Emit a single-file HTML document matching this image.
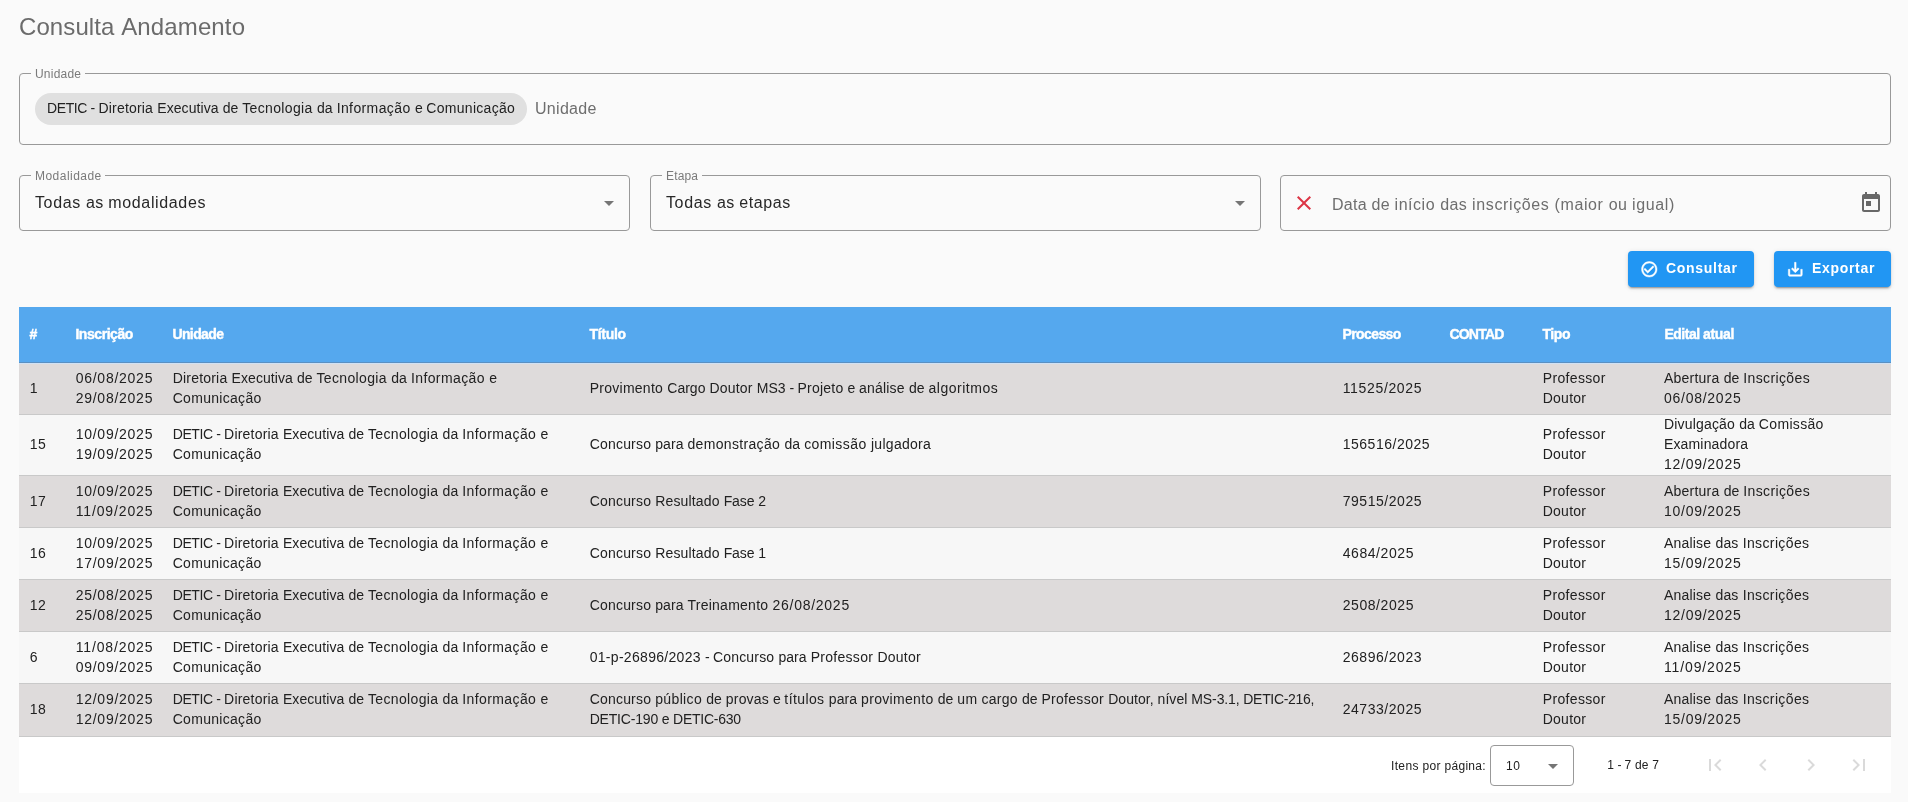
<!DOCTYPE html>
<html lang="pt-BR">
<head>
<meta charset="utf-8">
<title>Consulta Andamento</title>
<style>
*{box-sizing:border-box;}
html,body{margin:0;padding:0;}
body{will-change:transform;width:1908px;height:802px;background:#fafafa;font-family:"Liberation Sans",sans-serif;color:rgba(0,0,0,.87);position:relative;overflow:hidden;}
.abs{position:absolute;}
.t{white-space:nowrap;}
h1{position:absolute;left:19px;top:10.5px;margin:0;font-size:24px;line-height:32px;font-weight:400;color:#6b6b6b;white-space:nowrap;}
.field{position:absolute;border:1px solid #999;border-radius:4px;}
.lbl{position:absolute;left:10.8px;top:-7px;padding:0 3.7px 0 4.2px;background:#fafafa;font-size:12px;line-height:14px;color:#7a7a7a;white-space:nowrap;}
.chip{position:absolute;left:15px;top:19px;height:32px;border-radius:16px;background:#e0e0e0;padding:0 12px;font-size:14px;line-height:32px;color:#212121;white-space:nowrap;}
.ph{position:absolute;font-size:16px;line-height:24px;color:#6e6e6e;white-space:nowrap;}
.val{position:absolute;left:15px;top:15px;font-size:16px;line-height:24px;color:#282828;white-space:nowrap;}
.arrow{position:absolute;width:0;height:0;border-left:5px solid transparent;border-right:5px solid transparent;border-top:5px solid #757575;}
.btn{position:absolute;height:36px;top:251px;border-radius:4px;background:#2196f3;color:#fff;font-size:14px;font-weight:700;line-height:36px;white-space:nowrap;box-shadow:0 3px 1px -2px rgba(0,0,0,.2),0 2px 2px 0 rgba(0,0,0,.14),0 1px 5px 0 rgba(0,0,0,.12);}
.btn svg{position:absolute;left:11.7px;top:8.9px;width:18.6px;height:18.6px;fill:#fff;stroke:#fff;stroke-width:.6;}
.btn .bl{position:absolute;left:38px;top:-1px;}
.tbl{position:absolute;left:19px;top:307px;width:1872px;}
.thead{position:relative;height:56px;background:#55a8ee;border-bottom:1px solid #5a90c2;color:#fff;font-size:14px;font-weight:700;}
.thead .c{position:absolute;top:0;line-height:55px;white-space:nowrap;-webkit-text-stroke:.42px #fff;margin-left:.4px;}
.tr{position:relative;border-bottom:1px solid #c9c9c9;font-size:14px;line-height:20px;color:#212121;}
.tr.odd{background:#dedbdb;}
.tr.even{background:#f7f7f7;}
.tr .c{position:absolute;margin-left:.7px;top:0;bottom:1.2px;display:flex;align-items:center;white-space:nowrap;}
.pag{position:relative;height:56px;background:#fff;font-size:12px;color:#212121;}
.pag .pl{position:absolute;left:1372px;top:18.5px;line-height:20px;white-space:nowrap;}
.pag .psel{position:absolute;left:1471px;top:8px;width:84px;height:41px;border:1px solid #999;border-radius:4px;}
.pag .pv{position:absolute;left:15px;top:10px;line-height:20px;}
.pag .pr{position:absolute;left:1588.2px;top:17.7px;line-height:20px;white-space:nowrap;}
.pag .nav{position:absolute;top:16px;width:24px;height:24px;fill:#dadada;}
.chip .t{position:relative;top:-.7px;}
.tr:nth-child(2){box-shadow:inset 0 1px 0 #d0e2f5;}

</style>
</head>
<body>
<h1><span class="t h"><span style="letter-spacing:.09px">Consulta </span><span style="letter-spacing:.13px">Andamento</span></span></h1>

<div class="field" style="left:19px;top:73px;width:1872px;height:72px;">
  <div class="lbl"><span class="t lb"><span style="letter-spacing:.22px">Unidade</span></span></div>
  <div class="chip"><span class="t ch"><span style="letter-spacing:-.39px">DETIC </span><span style="letter-spacing:-.36px">- </span><span style="letter-spacing:.2px">Diretoria </span><span style="letter-spacing:.09px">Executiva </span><span style="letter-spacing:.02px">de </span><span style="letter-spacing:.35px">Tecnologia </span><span style="letter-spacing:.09px">da </span><span style="letter-spacing:.39px">Informação </span><span style="letter-spacing:-.14px">e </span><span style="letter-spacing:.3px">Comunicação</span></span></div>
  <div class="ph" style="left:515px;top:23px;"><span class="t in"><span style="letter-spacing:.29px">Unidade</span></span></div>
</div>

<div class="field" style="left:19px;top:175px;width:611px;height:56px;">
  <div class="lbl"><span class="t lb"><span style="letter-spacing:.47px">Modalidade</span></span></div>
  <div class="val"><span class="t in"><span style="letter-spacing:.62px">Todas </span><span style="letter-spacing:.36px">as </span><span style="letter-spacing:.64px">modalidades</span></span></div>
  <i class="arrow" style="left:584px;top:25px;"></i>
</div>
<div class="field" style="left:650px;top:175px;width:611px;height:56px;">
  <div class="lbl"><span class="t lb"><span style="letter-spacing:.17px">Etapa</span></span></div>
  <div class="val"><span class="t in"><span style="letter-spacing:.62px">Todas </span><span style="letter-spacing:.36px">as </span><span style="letter-spacing:.57px">etapas</span></span></div>
  <i class="arrow" style="left:584px;top:25px;"></i>
</div>
<div class="field" style="left:1280px;top:175px;width:611px;height:56px;">
  <svg class="abs" style="left:11px;top:15px;width:24px;height:24px;" viewBox="0 0 24 24"><path fill="#dc3545" d="M19 6.41L17.59 5 12 10.59 6.41 5 5 6.41 10.59 12 5 17.59 6.41 19 12 13.41 17.59 19 19 17.59 13.41 12z"/></svg>
  <div class="ph" style="left:51px;top:17px;"><span class="t in"><span style="letter-spacing:.27px">Data </span><span style="letter-spacing:.24px">de </span><span style="letter-spacing:.54px">início </span><span style="letter-spacing:.43px">das </span><span style="letter-spacing:.62px">inscrições </span><span style="letter-spacing:.62px">(maior </span><span style="letter-spacing:.39px">ou </span><span style="letter-spacing:.64px">igual)</span></span></div>
  <svg class="abs" style="left:578px;top:15px;width:24px;height:24px;" viewBox="0 0 24 24"><path fill="#686868" d="M19 3h-1V1h-2v2H8V1H6v2H5c-1.11 0-1.99.9-1.99 2L3 19c0 1.1.89 2 2 2h14c1.1 0 2-.9 2-2V5c0-1.1-.9-2-2-2zm0 16H5V8h14v11zM7 10h5v5H7z"/></svg>
</div>

<div class="btn" style="left:1628px;width:126px;">
  <svg viewBox="0 0 24 24"><path d="M16.59 7.58L10 14.17l-3.59-3.58L5 12l5 5 8-8zM12 2C6.48 2 2 6.48 2 12s4.48 10 10 10 10-4.48 10-10S17.52 2 12 2zm0 18c-4.42 0-8-3.58-8-8s3.58-8 8-8 8 3.58 8 8-3.58 8-8 8z"/></svg>
  <div class="bl"><span class="t bt"><span style="letter-spacing:.71px">Consultar</span></span></div>
</div>
<div class="btn" style="left:1774px;width:117px;">
  <svg viewBox="0 0 24 24"><path d="M19 12v7H5v-7H3v7c0 1.1.9 2 2 2h14c1.1 0 2-.9 2-2v-7h-2zm-6 .67l2.59-2.58L17 11.5l-5 5-5-5 1.41-1.41L11 12.67V3h2z"/></svg>
  <div class="bl"><span class="t bt"><span style="letter-spacing:.68px">Exportar</span></span></div>
</div>

<div class="tbl">
<div class="thead">
<div class="c" style="left:10px"><span class="t th"><span>#</span></span></div>
<div class="c" style="left:56px"><span class="t th"><span style="letter-spacing:-.44px">Inscrição</span></span></div>
<div class="c" style="left:153px"><span class="t th"><span style="letter-spacing:-.6px">Unidade</span></span></div>
<div class="c" style="left:570px"><span class="t th"><span style="letter-spacing:-.28px">Título</span></span></div>
<div class="c" style="left:1323px"><span class="t th"><span style="letter-spacing:-.58px">Processo</span></span></div>
<div class="c" style="left:1430px"><span class="t th"><span style="letter-spacing:-.78px">CONTAD</span></span></div>
<div class="c" style="left:1523px"><span class="t th"><span style="letter-spacing:-.38px">Tipo</span></span></div>
<div class="c" style="left:1645px"><span class="t th"><span style="letter-spacing:-.47px">Edital </span><span style="letter-spacing:-.35px">atual</span></span></div>
</div>
<div class="tr odd" style="height:52px">
<div class="c" style="left:10px"><div><span class="t td"><span>1</span></span></div></div>
<div class="c" style="left:56px"><div><span class="t td"><span style="letter-spacing:.74px">06/08/2025</span></span><br><span class="t td"><span style="letter-spacing:.74px">29/08/2025</span></span></div></div>
<div class="c" style="left:153px"><div><span class="t td"><span style="letter-spacing:.2px">Diretoria </span><span style="letter-spacing:.09px">Executiva </span><span style="letter-spacing:.02px">de </span><span style="letter-spacing:.35px">Tecnologia </span><span style="letter-spacing:.09px">da </span><span style="letter-spacing:.39px">Informação </span><span>e</span></span><br><span class="t td"><span style="letter-spacing:.3px">Comunicação</span></span></div></div>
<div class="c" style="left:570px"><div><span class="t td"><span style="letter-spacing:.26px">Provimento </span><span style="letter-spacing:.02px">Cargo </span><span style="letter-spacing:.2px">Doutor </span><span style="letter-spacing:.05px">MS3 </span><span style="letter-spacing:-.36px">- </span><span style="letter-spacing:.23px">Projeto </span><span style="letter-spacing:-.14px">e </span><span style="letter-spacing:.21px">análise </span><span style="letter-spacing:.03px">de </span><span style="letter-spacing:.53px">algoritmos</span></span></div></div>
<div class="c" style="left:1323px"><div><span class="t td"><span style="letter-spacing:.66px">11525/2025</span></span></div></div>
<div class="c" style="left:1523px"><div><span class="t td"><span style="letter-spacing:.35px">Professor</span></span><br><span class="t td"><span style="letter-spacing:.26px">Doutor</span></span></div></div>
<div class="c" style="left:1644.3px"><div><span class="t td"><span style="letter-spacing:.23px">Abertura </span><span style="letter-spacing:.03px">de </span><span style="letter-spacing:.38px">Inscrições</span></span><br><span class="t td"><span style="letter-spacing:.74px">06/08/2025</span></span></div></div>
</div>
<div class="tr even" style="height:61px">
<div class="c" style="left:10px"><div><span class="t td"><span style="letter-spacing:.42px">15</span></span></div></div>
<div class="c" style="left:56px"><div><span class="t td"><span style="letter-spacing:.74px">10/09/2025</span></span><br><span class="t td"><span style="letter-spacing:.74px">19/09/2025</span></span></div></div>
<div class="c" style="left:153px"><div><span class="t td"><span style="letter-spacing:-.39px">DETIC </span><span style="letter-spacing:-.36px">- </span><span style="letter-spacing:.2px">Diretoria </span><span style="letter-spacing:.09px">Executiva </span><span style="letter-spacing:.02px">de </span><span style="letter-spacing:.35px">Tecnologia </span><span style="letter-spacing:.09px">da </span><span style="letter-spacing:.39px">Informação </span><span>e</span></span><br><span class="t td"><span style="letter-spacing:.3px">Comunicação</span></span></div></div>
<div class="c" style="left:570px"><div><span class="t td"><span style="letter-spacing:.19px">Concurso </span><span style="letter-spacing:.07px">para </span><span style="letter-spacing:.33px">demonstração </span><span style="letter-spacing:.09px">da </span><span style="letter-spacing:.42px">comissão </span><span style="letter-spacing:.29px">julgadora</span></span></div></div>
<div class="c" style="left:1323px"><div><span class="t td"><span style="letter-spacing:.52px">156516/2025</span></span></div></div>
<div class="c" style="left:1523px"><div><span class="t td"><span style="letter-spacing:.35px">Professor</span></span><br><span class="t td"><span style="letter-spacing:.26px">Doutor</span></span></div></div>
<div class="c" style="left:1644.3px"><div><span class="t td"><span style="letter-spacing:.18px">Divulgação </span><span style="letter-spacing:.09px">da </span><span style="letter-spacing:.33px">Comissão</span></span><br><span class="t td"><span style="letter-spacing:.15px">Examinadora</span></span><br><span class="t td"><span style="letter-spacing:.74px">12/09/2025</span></span></div></div>
</div>
<div class="tr odd" style="height:52px">
<div class="c" style="left:10px"><div><span class="t td"><span style="letter-spacing:.42px">17</span></span></div></div>
<div class="c" style="left:56px"><div><span class="t td"><span style="letter-spacing:.74px">10/09/2025</span></span><br><span class="t td"><span style="letter-spacing:.86px">11/09/2025</span></span></div></div>
<div class="c" style="left:153px"><div><span class="t td"><span style="letter-spacing:-.39px">DETIC </span><span style="letter-spacing:-.36px">- </span><span style="letter-spacing:.2px">Diretoria </span><span style="letter-spacing:.09px">Executiva </span><span style="letter-spacing:.02px">de </span><span style="letter-spacing:.35px">Tecnologia </span><span style="letter-spacing:.09px">da </span><span style="letter-spacing:.39px">Informação </span><span>e</span></span><br><span class="t td"><span style="letter-spacing:.3px">Comunicação</span></span></div></div>
<div class="c" style="left:570px"><div><span class="t td"><span style="letter-spacing:.19px">Concurso </span><span style="letter-spacing:.15px">Resultado </span><span style="letter-spacing:-.1px">Fase </span><span>2</span></span></div></div>
<div class="c" style="left:1323px"><div><span class="t td"><span style="letter-spacing:.54px">79515/2025</span></span></div></div>
<div class="c" style="left:1523px"><div><span class="t td"><span style="letter-spacing:.35px">Professor</span></span><br><span class="t td"><span style="letter-spacing:.26px">Doutor</span></span></div></div>
<div class="c" style="left:1644.3px"><div><span class="t td"><span style="letter-spacing:.23px">Abertura </span><span style="letter-spacing:.03px">de </span><span style="letter-spacing:.38px">Inscrições</span></span><br><span class="t td"><span style="letter-spacing:.74px">10/09/2025</span></span></div></div>
</div>
<div class="tr even" style="height:52px">
<div class="c" style="left:10px"><div><span class="t td"><span style="letter-spacing:.42px">16</span></span></div></div>
<div class="c" style="left:56px"><div><span class="t td"><span style="letter-spacing:.74px">10/09/2025</span></span><br><span class="t td"><span style="letter-spacing:.74px">17/09/2025</span></span></div></div>
<div class="c" style="left:153px"><div><span class="t td"><span style="letter-spacing:-.39px">DETIC </span><span style="letter-spacing:-.36px">- </span><span style="letter-spacing:.2px">Diretoria </span><span style="letter-spacing:.09px">Executiva </span><span style="letter-spacing:.02px">de </span><span style="letter-spacing:.35px">Tecnologia </span><span style="letter-spacing:.09px">da </span><span style="letter-spacing:.39px">Informação </span><span>e</span></span><br><span class="t td"><span style="letter-spacing:.3px">Comunicação</span></span></div></div>
<div class="c" style="left:570px"><div><span class="t td"><span style="letter-spacing:.19px">Concurso </span><span style="letter-spacing:.15px">Resultado </span><span style="letter-spacing:-.1px">Fase </span><span>1</span></span></div></div>
<div class="c" style="left:1323px"><div><span class="t td"><span style="letter-spacing:.57px">4684/2025</span></span></div></div>
<div class="c" style="left:1523px"><div><span class="t td"><span style="letter-spacing:.35px">Professor</span></span><br><span class="t td"><span style="letter-spacing:.26px">Doutor</span></span></div></div>
<div class="c" style="left:1644.3px"><div><span class="t td"><span style="letter-spacing:.2px">Analise </span><span style="letter-spacing:.19px">das </span><span style="letter-spacing:.38px">Inscrições</span></span><br><span class="t td"><span style="letter-spacing:.74px">15/09/2025</span></span></div></div>
</div>
<div class="tr odd" style="height:52px">
<div class="c" style="left:10px"><div><span class="t td"><span style="letter-spacing:.42px">12</span></span></div></div>
<div class="c" style="left:56px"><div><span class="t td"><span style="letter-spacing:.74px">25/08/2025</span></span><br><span class="t td"><span style="letter-spacing:.74px">25/08/2025</span></span></div></div>
<div class="c" style="left:153px"><div><span class="t td"><span style="letter-spacing:-.39px">DETIC </span><span style="letter-spacing:-.36px">- </span><span style="letter-spacing:.2px">Diretoria </span><span style="letter-spacing:.09px">Executiva </span><span style="letter-spacing:.02px">de </span><span style="letter-spacing:.35px">Tecnologia </span><span style="letter-spacing:.09px">da </span><span style="letter-spacing:.39px">Informação </span><span>e</span></span><br><span class="t td"><span style="letter-spacing:.3px">Comunicação</span></span></div></div>
<div class="c" style="left:570px"><div><span class="t td"><span style="letter-spacing:.19px">Concurso </span><span style="letter-spacing:.07px">para </span><span style="letter-spacing:.25px">Treinamento </span><span style="letter-spacing:.74px">26/08/2025</span></span></div></div>
<div class="c" style="left:1323px"><div><span class="t td"><span style="letter-spacing:.57px">2508/2025</span></span></div></div>
<div class="c" style="left:1523px"><div><span class="t td"><span style="letter-spacing:.35px">Professor</span></span><br><span class="t td"><span style="letter-spacing:.26px">Doutor</span></span></div></div>
<div class="c" style="left:1644.3px"><div><span class="t td"><span style="letter-spacing:.2px">Analise </span><span style="letter-spacing:.19px">das </span><span style="letter-spacing:.38px">Inscrições</span></span><br><span class="t td"><span style="letter-spacing:.74px">12/09/2025</span></span></div></div>
</div>
<div class="tr even" style="height:52px">
<div class="c" style="left:10px"><div><span class="t td"><span>6</span></span></div></div>
<div class="c" style="left:56px"><div><span class="t td"><span style="letter-spacing:.86px">11/08/2025</span></span><br><span class="t td"><span style="letter-spacing:.74px">09/09/2025</span></span></div></div>
<div class="c" style="left:153px"><div><span class="t td"><span style="letter-spacing:-.39px">DETIC </span><span style="letter-spacing:-.36px">- </span><span style="letter-spacing:.2px">Diretoria </span><span style="letter-spacing:.09px">Executiva </span><span style="letter-spacing:.02px">de </span><span style="letter-spacing:.35px">Tecnologia </span><span style="letter-spacing:.09px">da </span><span style="letter-spacing:.39px">Informação </span><span>e</span></span><br><span class="t td"><span style="letter-spacing:.3px">Comunicação</span></span></div></div>
<div class="c" style="left:570px"><div><span class="t td"><span style="letter-spacing:.3px">01-p-26896/2023 </span><span style="letter-spacing:-.36px">- </span><span style="letter-spacing:.19px">Concurso </span><span style="letter-spacing:.07px">para </span><span style="letter-spacing:.29px">Professor </span><span style="letter-spacing:.26px">Doutor</span></span></div></div>
<div class="c" style="left:1323px"><div><span class="t td"><span style="letter-spacing:.54px">26896/2023</span></span></div></div>
<div class="c" style="left:1523px"><div><span class="t td"><span style="letter-spacing:.35px">Professor</span></span><br><span class="t td"><span style="letter-spacing:.26px">Doutor</span></span></div></div>
<div class="c" style="left:1644.3px"><div><span class="t td"><span style="letter-spacing:.2px">Analise </span><span style="letter-spacing:.19px">das </span><span style="letter-spacing:.38px">Inscrições</span></span><br><span class="t td"><span style="letter-spacing:.86px">11/09/2025</span></span></div></div>
</div>
<div class="tr odd" style="height:53px">
<div class="c" style="left:10px"><div><span class="t td"><span style="letter-spacing:.42px">18</span></span></div></div>
<div class="c" style="left:56px"><div><span class="t td"><span style="letter-spacing:.74px">12/09/2025</span></span><br><span class="t td"><span style="letter-spacing:.74px">12/09/2025</span></span></div></div>
<div class="c" style="left:153px"><div><span class="t td"><span style="letter-spacing:-.39px">DETIC </span><span style="letter-spacing:-.36px">- </span><span style="letter-spacing:.2px">Diretoria </span><span style="letter-spacing:.09px">Executiva </span><span style="letter-spacing:.02px">de </span><span style="letter-spacing:.35px">Tecnologia </span><span style="letter-spacing:.09px">da </span><span style="letter-spacing:.39px">Informação </span><span>e</span></span><br><span class="t td"><span style="letter-spacing:.3px">Comunicação</span></span></div></div>
<div class="c" style="left:570px"><div><span class="t td"><span style="letter-spacing:.19px">Concurso </span><span style="letter-spacing:.35px">público </span><span style="letter-spacing:.03px">de </span><span style="letter-spacing:.17px">provas </span><span style="letter-spacing:-.14px">e </span><span style="letter-spacing:.4px">títulos </span><span style="letter-spacing:.07px">para </span><span style="letter-spacing:.32px">provimento </span><span style="letter-spacing:.03px">de </span><span style="letter-spacing:.29px">um </span><span style="letter-spacing:.24px">cargo </span><span style="letter-spacing:.03px">de </span><span style="letter-spacing:.29px">Professor </span><span style="letter-spacing:.05px">Doutor, </span><span style="letter-spacing:.04px">nível </span><span style="letter-spacing:-.11px">MS-3.1, </span><span style="letter-spacing:-.32px">DETIC-216,</span></span><br><span class="t td"><span style="letter-spacing:-.19px">DETIC-190 </span><span style="letter-spacing:-.14px">e </span><span style="letter-spacing:-.25px">DETIC-630</span></span></div></div>
<div class="c" style="left:1323px"><div><span class="t td"><span style="letter-spacing:.54px">24733/2025</span></span></div></div>
<div class="c" style="left:1523px"><div><span class="t td"><span style="letter-spacing:.35px">Professor</span></span><br><span class="t td"><span style="letter-spacing:.26px">Doutor</span></span></div></div>
<div class="c" style="left:1644.3px"><div><span class="t td"><span style="letter-spacing:.2px">Analise </span><span style="letter-spacing:.19px">das </span><span style="letter-spacing:.38px">Inscrições</span></span><br><span class="t td"><span style="letter-spacing:.74px">15/09/2025</span></span></div></div>
</div>
<div class="pag">
<div class="pl"><span class="t pg"><span style="letter-spacing:.35px">Itens </span><span style="letter-spacing:.34px">por </span><span style="letter-spacing:.29px">página:</span></span></div>
<div class="psel"><div class="pv"><span class="t pg"><span style="letter-spacing:.49px">10</span></span></div><i class="arrow" style="left:57px;top:18px;"></i></div>
<div class="pr"><span class="t pg"><span style="letter-spacing:.2px">1 </span><span style="letter-spacing:-.17px">- </span><span style="letter-spacing:.2px">7 </span><span style="letter-spacing:.16px">de </span><span>7</span></span></div>
<svg class="nav" style="left:1684px" viewBox="0 0 24 24"><path d="M18.41 16.59L13.82 12l4.59-4.59L17 6l-6 6 6 6zM6 6h2v12H6z"/></svg>
<svg class="nav" style="left:1732px" viewBox="0 0 24 24"><path d="M15.41 7.41L14 6l-6 6 6 6 1.41-1.41L10.83 12z"/></svg>
<svg class="nav" style="left:1780px" viewBox="0 0 24 24"><path d="M10 6L8.59 7.41 13.17 12l-4.58 4.59L10 18l6-6z"/></svg>
<svg class="nav" style="left:1828px" viewBox="0 0 24 24"><path d="M5.59 7.41L10.18 12l-4.59 4.59L7 18l6-6-6-6zM16 6h2v12h-2z"/></svg>
</div>
</div>
</body>
</html>
